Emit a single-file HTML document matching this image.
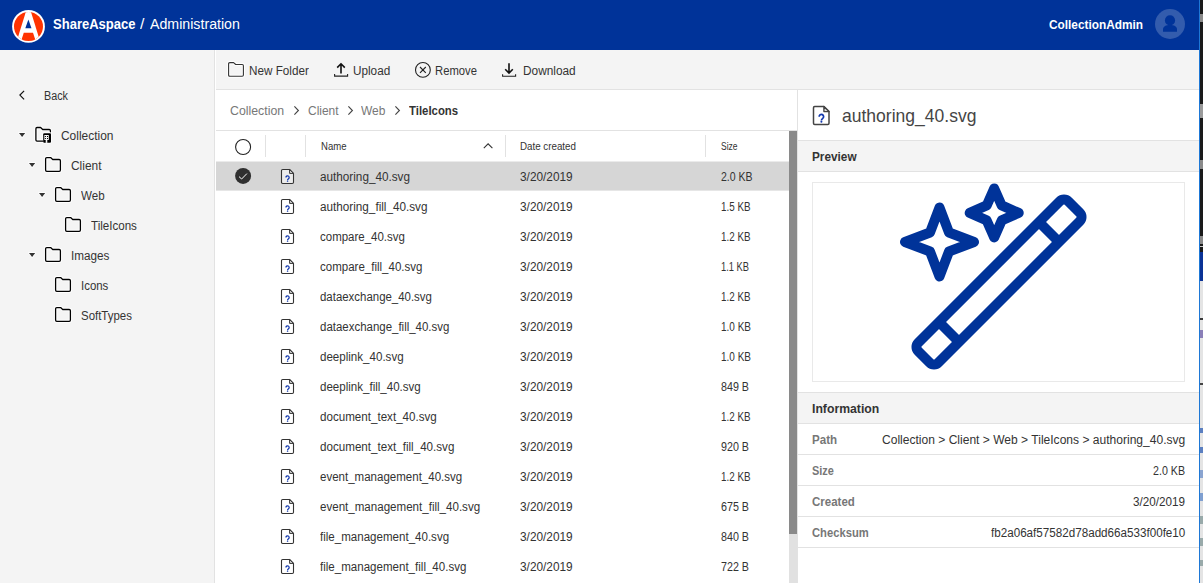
<!DOCTYPE html>
<html lang="en">
<head>
<meta charset="utf-8">
<title>ShareAspace / Administration</title>
<style>
*{box-sizing:border-box;margin:0;padding:0}
html,body{width:1203px;height:583px;overflow:hidden;background:#fff}
body{font-family:"Liberation Sans",sans-serif;color:#333;position:relative}
.abs{position:absolute}
.t{position:absolute;white-space:nowrap;color:#333;transform-origin:0 0}
#header{left:0;top:0;width:1200px;height:50px;background:#003399}
#sidebar{left:0;top:50px;width:215px;height:533px;background:#f4f4f4;border-right:1px solid #e2e2e2}
#toolbar{left:216px;top:50px;width:984px;height:40px;background:#f4f4f4;border-bottom:1px solid #e2e2e2}
#crumbs{left:216px;top:90px;width:582px;height:41px;background:#fff;border-bottom:1px solid #e2e2e2}
#list{left:216px;top:131px;width:573px;height:452px;background:#fff}
.hsep{position:absolute;top:135px;width:1px;height:22px;background:#e2e2e2}
#selrow{left:216px;top:161px;width:573px;height:30px;background:linear-gradient(#ebebeb 0,#ebebeb 1px,#d6d6d6 1px,#d6d6d6 29px,#e6e6e6 29px,#e6e6e6 30px)}
#sbtrack{left:789px;top:131px;width:8px;height:452px;background:#e1e1e1}
#sbthumb{left:789px;top:131px;width:8px;height:403px;background:#8a8a8a}
#panel{left:797px;top:90px;width:403px;height:493px;background:#fff;border-left:1px solid #e2e2e2}
.ph{position:absolute;left:798px;width:402px;background:#f4f4f4;border-top:1px solid #e2e2e2;border-bottom:1px solid #e2e2e2}
#pvbox{left:812px;top:182px;width:373px;height:200px;border:1px solid #e9e9e9;background:#fff}
.iline{position:absolute;left:798px;width:402px;height:1px;background:#e2e2e2}
#edge1{left:1199px;top:0;width:1px;height:583px;background:#1e78d6}
#edge2{left:1200px;top:0;width:3px;height:252px;background:#1a1a1a}
#edge4{left:1200px;top:252px;width:3px;height:29px;background:#0a3296}
#edge3{left:1200px;top:281px;width:3px;height:302px;background:#e4e4e4}
svg{position:absolute;overflow:visible}
</style>
</head>
<body>
<div id="header" class="abs"></div>
<div id="sidebar" class="abs"></div>
<div id="toolbar" class="abs"></div>
<div id="crumbs" class="abs"></div>
<div id="list" class="abs"></div>
<div id="selrow" class="abs"></div>
<div class="hsep" style="left:265px"></div>
<div class="hsep" style="left:305px"></div>
<div class="hsep" style="left:505px"></div>
<div class="hsep" style="left:705px"></div>
<div id="sbtrack" class="abs"></div>
<div id="sbthumb" class="abs"></div>
<div id="panel" class="abs"></div>
<div class="ph" style="top:140px;height:32px"></div>
<div class="ph" style="top:392px;height:32px"></div>
<div id="pvbox" class="abs"></div>
<div class="iline" style="top:454px"></div>
<div class="iline" style="top:485px"></div>
<div class="iline" style="top:516px"></div>
<div class="iline" style="top:547px"></div>
<div id="edge1" class="abs"></div>
<div id="edge2" class="abs"></div>
<div id="edge4" class="abs"></div>
<div id="edge3" class="abs"></div>
<div class="abs" style="left:1200px;top:14px;width:3px;height:8px;background:#8a8a8a"></div>
<div class="abs" style="left:1200px;top:104px;width:3px;height:14px;background:#9a9a9a"></div>
<div class="abs" style="left:1200px;top:160px;width:3px;height:9px;background:#8a8a8a"></div>
<div class="abs" style="left:1200px;top:236px;width:3px;height:8px;background:#8a8a8a"></div>
<div class="abs" style="left:1200px;top:246px;width:3px;height:1px;background:#ccc"></div>
<div class="abs" style="left:1200px;top:318px;width:3px;height:2px;background:#3a3a3a"></div>
<div class="abs" style="left:1200px;top:330px;width:3px;height:8px;background:#8a7fb8"></div>
<div class="abs" style="left:1200px;top:383px;width:3px;height:2px;background:#444"></div>
<div class="abs" style="left:1200px;top:428px;width:3px;height:5px;background:#5b7fc0"></div>
<div class="abs" style="left:1200px;top:447px;width:3px;height:6px;background:#5b7fc0"></div>
<div class="abs" style="left:1200px;top:470px;width:3px;height:8px;background:#8aa4d0"></div>
<div class="abs" style="left:1200px;top:493px;width:3px;height:8px;background:#7f9fd0"></div>
<div class="abs" style="left:1200px;top:516px;width:3px;height:8px;background:#9aa"></div>
<div class="abs" style="left:1200px;top:538px;width:3px;height:8px;background:#9aa"></div>
<div class="abs" style="left:1200px;top:560px;width:3px;height:6px;background:#9aa"></div>


<svg style="left:0;top:0" width="60" height="50" viewBox="0 0 60 50">
<defs><clipPath id="lc"><circle cx="28.5" cy="26.4" r="14.5"/></clipPath></defs>
<circle cx="28.5" cy="26.4" r="16.4" fill="#fff"/>
<circle cx="28.5" cy="26.4" r="14.5" fill="#ff3300"/>
<g clip-path="url(#lc)">
<polygon points="26.7,9 30.1,9 40.6,43 16.2,43" fill="#fff"/>
<polygon points="23.8,32.8 33,32.8 36.4,43 20.4,43" fill="#ff3300"/>
</g>
<polygon points="28.4,19.4 31.5,28.3 25.3,28.3" fill="#003399"/>
</svg>
<svg style="left:1150px;top:4px" width="40" height="40" viewBox="1150 4 40 40">
<circle cx="1170" cy="24" r="15" fill="#335cad"/>
<circle cx="1170" cy="20.4" r="5.1" fill="#003399"/>
<path d="M1163,31.8 V29.2 C1163,26.4 1166,24.9 1170,24.9 C1174,24.9 1177,26.4 1177,29.2 V31.8 Z" fill="#003399"/>
</svg>
<svg style="left:228px;top:62.2px" width="17" height="16" viewBox="0 0 17 16"><path d="M0.6,1.8 Q0.6,0.6 1.8,0.6 H5.6 L7.7,2.5 H14.2 Q15.4,2.5 15.4,3.7 V13.1 Q15.4,14.3 14.2,14.3 H1.8 Q0.6,14.3 0.6,13.1 Z" fill="none" stroke="#fff" stroke-width="3.1" stroke-linejoin="round"/><path d="M0.6,1.8 Q0.6,0.6 1.8,0.6 H5.6 L7.7,2.5 H14.2 Q15.4,2.5 15.4,3.7 V13.1 Q15.4,14.3 14.2,14.3 H1.8 Q0.6,14.3 0.6,13.1 Z" fill="none" stroke="#333" stroke-width="1.1" stroke-linejoin="round"/></svg>
<svg style="left:333px;top:62px" width="17" height="16" viewBox="333 62 17 16">
<path d="M341,64 V73.5 M337.2,67.6 L341,63.8 L344.8,67.6" fill="none" stroke="#111" stroke-width="1.6"/>
<path d="M334.6,74 V76.1 H347.6 V74" fill="none" stroke="#222" stroke-width="1.1"/></svg>
<svg style="left:414px;top:61px" width="18" height="18" viewBox="414 61 18 18">
<circle cx="422.9" cy="69.9" r="7.4" fill="none" stroke="#222" stroke-width="1.1"/>
<path d="M420,67 L425.8,72.8 M425.8,67 L420,72.8" fill="none" stroke="#222" stroke-width="1.1"/></svg>
<svg style="left:501px;top:62px" width="17" height="16" viewBox="501 62 17 16">
<path d="M509,63.2 V72.8 M505.2,69.2 L509,73 L512.8,69.2" fill="none" stroke="#111" stroke-width="1.6"/>
<path d="M502.6,74.2 V76.3 H515.6 V74.2" fill="none" stroke="#222" stroke-width="1.1"/></svg>
<svg style="left:293.9px;top:105.6px" width="6" height="10" viewBox="0 0 6 10"><path d="M0.4,0.4 L4.4,4.5 L0.4,8.6" fill="none" stroke="#444" stroke-width="1.15"/></svg>
<svg style="left:347.7px;top:105.6px" width="6" height="10" viewBox="0 0 6 10"><path d="M0.4,0.4 L4.4,4.5 L0.4,8.6" fill="none" stroke="#444" stroke-width="1.15"/></svg>
<svg style="left:394.7px;top:105.6px" width="6" height="10" viewBox="0 0 6 10"><path d="M0.4,0.4 L4.4,4.5 L0.4,8.6" fill="none" stroke="#444" stroke-width="1.15"/></svg>
<svg style="left:234px;top:138px" width="18" height="18" viewBox="234 138 18 18">
<circle cx="243.1" cy="147" r="7.5" fill="#fff" stroke="#222" stroke-width="1.1"/></svg>
<svg style="left:483px;top:143px" width="11" height="6" viewBox="483 143 11 6">
<path d="M483.8,148.2 L488.1,143.9 L492.4,148.2" fill="none" stroke="#333" stroke-width="1.1"/></svg>
<svg style="left:234px;top:167px" width="18" height="18" viewBox="234 167 18 18">
<circle cx="243.1" cy="175.9" r="8" fill="#303030"/>
<path d="M239,176.6 L241.6,179 L246.9,173.6" fill="none" stroke="#fff" stroke-width="1"/></svg>
<svg style="left:281.1px;top:169.1px" width="14" height="16" viewBox="0 0 14 16"><path d="M1.7,0.5 H8.6 L12.5,4.4 V13.3 Q12.5,14.5 11.3,14.5 H1.7 Q0.5,14.5 0.5,13.3 V1.7 Q0.5,0.5 1.7,0.5 Z" fill="#fff" fill-opacity="0.55" stroke="#333" stroke-width="1.1" stroke-linejoin="round"/><path d="M8.6,0.5 V4.4 H12.5 Z" fill="#ddd" stroke="#333" stroke-width="0.99" stroke-linejoin="round"/><path d="M4.94,8.55 A1.61,1.61 0 1 1 7.52,9.74 Q6.55,10.62 6.55,11.26" fill="none" stroke="#1238ae" stroke-width="1.24"/><circle cx="6.55" cy="12.13" r="0.74" fill="#1238ae"/></svg>
<svg style="left:281.1px;top:199.1px" width="14" height="16" viewBox="0 0 14 16"><path d="M1.7,0.5 H8.6 L12.5,4.4 V13.3 Q12.5,14.5 11.3,14.5 H1.7 Q0.5,14.5 0.5,13.3 V1.7 Q0.5,0.5 1.7,0.5 Z" fill="#fff" fill-opacity="0.55" stroke="#333" stroke-width="1.1" stroke-linejoin="round"/><path d="M8.6,0.5 V4.4 H12.5 Z" fill="#ddd" stroke="#333" stroke-width="0.99" stroke-linejoin="round"/><path d="M4.94,8.55 A1.61,1.61 0 1 1 7.52,9.74 Q6.55,10.62 6.55,11.26" fill="none" stroke="#1238ae" stroke-width="1.24"/><circle cx="6.55" cy="12.13" r="0.74" fill="#1238ae"/></svg>
<svg style="left:281.1px;top:229.1px" width="14" height="16" viewBox="0 0 14 16"><path d="M1.7,0.5 H8.6 L12.5,4.4 V13.3 Q12.5,14.5 11.3,14.5 H1.7 Q0.5,14.5 0.5,13.3 V1.7 Q0.5,0.5 1.7,0.5 Z" fill="#fff" fill-opacity="0.55" stroke="#333" stroke-width="1.1" stroke-linejoin="round"/><path d="M8.6,0.5 V4.4 H12.5 Z" fill="#ddd" stroke="#333" stroke-width="0.99" stroke-linejoin="round"/><path d="M4.94,8.55 A1.61,1.61 0 1 1 7.52,9.74 Q6.55,10.62 6.55,11.26" fill="none" stroke="#1238ae" stroke-width="1.24"/><circle cx="6.55" cy="12.13" r="0.74" fill="#1238ae"/></svg>
<svg style="left:281.1px;top:259.1px" width="14" height="16" viewBox="0 0 14 16"><path d="M1.7,0.5 H8.6 L12.5,4.4 V13.3 Q12.5,14.5 11.3,14.5 H1.7 Q0.5,14.5 0.5,13.3 V1.7 Q0.5,0.5 1.7,0.5 Z" fill="#fff" fill-opacity="0.55" stroke="#333" stroke-width="1.1" stroke-linejoin="round"/><path d="M8.6,0.5 V4.4 H12.5 Z" fill="#ddd" stroke="#333" stroke-width="0.99" stroke-linejoin="round"/><path d="M4.94,8.55 A1.61,1.61 0 1 1 7.52,9.74 Q6.55,10.62 6.55,11.26" fill="none" stroke="#1238ae" stroke-width="1.24"/><circle cx="6.55" cy="12.13" r="0.74" fill="#1238ae"/></svg>
<svg style="left:281.1px;top:289.1px" width="14" height="16" viewBox="0 0 14 16"><path d="M1.7,0.5 H8.6 L12.5,4.4 V13.3 Q12.5,14.5 11.3,14.5 H1.7 Q0.5,14.5 0.5,13.3 V1.7 Q0.5,0.5 1.7,0.5 Z" fill="#fff" fill-opacity="0.55" stroke="#333" stroke-width="1.1" stroke-linejoin="round"/><path d="M8.6,0.5 V4.4 H12.5 Z" fill="#ddd" stroke="#333" stroke-width="0.99" stroke-linejoin="round"/><path d="M4.94,8.55 A1.61,1.61 0 1 1 7.52,9.74 Q6.55,10.62 6.55,11.26" fill="none" stroke="#1238ae" stroke-width="1.24"/><circle cx="6.55" cy="12.13" r="0.74" fill="#1238ae"/></svg>
<svg style="left:281.1px;top:319.1px" width="14" height="16" viewBox="0 0 14 16"><path d="M1.7,0.5 H8.6 L12.5,4.4 V13.3 Q12.5,14.5 11.3,14.5 H1.7 Q0.5,14.5 0.5,13.3 V1.7 Q0.5,0.5 1.7,0.5 Z" fill="#fff" fill-opacity="0.55" stroke="#333" stroke-width="1.1" stroke-linejoin="round"/><path d="M8.6,0.5 V4.4 H12.5 Z" fill="#ddd" stroke="#333" stroke-width="0.99" stroke-linejoin="round"/><path d="M4.94,8.55 A1.61,1.61 0 1 1 7.52,9.74 Q6.55,10.62 6.55,11.26" fill="none" stroke="#1238ae" stroke-width="1.24"/><circle cx="6.55" cy="12.13" r="0.74" fill="#1238ae"/></svg>
<svg style="left:281.1px;top:349.1px" width="14" height="16" viewBox="0 0 14 16"><path d="M1.7,0.5 H8.6 L12.5,4.4 V13.3 Q12.5,14.5 11.3,14.5 H1.7 Q0.5,14.5 0.5,13.3 V1.7 Q0.5,0.5 1.7,0.5 Z" fill="#fff" fill-opacity="0.55" stroke="#333" stroke-width="1.1" stroke-linejoin="round"/><path d="M8.6,0.5 V4.4 H12.5 Z" fill="#ddd" stroke="#333" stroke-width="0.99" stroke-linejoin="round"/><path d="M4.94,8.55 A1.61,1.61 0 1 1 7.52,9.74 Q6.55,10.62 6.55,11.26" fill="none" stroke="#1238ae" stroke-width="1.24"/><circle cx="6.55" cy="12.13" r="0.74" fill="#1238ae"/></svg>
<svg style="left:281.1px;top:379.1px" width="14" height="16" viewBox="0 0 14 16"><path d="M1.7,0.5 H8.6 L12.5,4.4 V13.3 Q12.5,14.5 11.3,14.5 H1.7 Q0.5,14.5 0.5,13.3 V1.7 Q0.5,0.5 1.7,0.5 Z" fill="#fff" fill-opacity="0.55" stroke="#333" stroke-width="1.1" stroke-linejoin="round"/><path d="M8.6,0.5 V4.4 H12.5 Z" fill="#ddd" stroke="#333" stroke-width="0.99" stroke-linejoin="round"/><path d="M4.94,8.55 A1.61,1.61 0 1 1 7.52,9.74 Q6.55,10.62 6.55,11.26" fill="none" stroke="#1238ae" stroke-width="1.24"/><circle cx="6.55" cy="12.13" r="0.74" fill="#1238ae"/></svg>
<svg style="left:281.1px;top:409.1px" width="14" height="16" viewBox="0 0 14 16"><path d="M1.7,0.5 H8.6 L12.5,4.4 V13.3 Q12.5,14.5 11.3,14.5 H1.7 Q0.5,14.5 0.5,13.3 V1.7 Q0.5,0.5 1.7,0.5 Z" fill="#fff" fill-opacity="0.55" stroke="#333" stroke-width="1.1" stroke-linejoin="round"/><path d="M8.6,0.5 V4.4 H12.5 Z" fill="#ddd" stroke="#333" stroke-width="0.99" stroke-linejoin="round"/><path d="M4.94,8.55 A1.61,1.61 0 1 1 7.52,9.74 Q6.55,10.62 6.55,11.26" fill="none" stroke="#1238ae" stroke-width="1.24"/><circle cx="6.55" cy="12.13" r="0.74" fill="#1238ae"/></svg>
<svg style="left:281.1px;top:439.1px" width="14" height="16" viewBox="0 0 14 16"><path d="M1.7,0.5 H8.6 L12.5,4.4 V13.3 Q12.5,14.5 11.3,14.5 H1.7 Q0.5,14.5 0.5,13.3 V1.7 Q0.5,0.5 1.7,0.5 Z" fill="#fff" fill-opacity="0.55" stroke="#333" stroke-width="1.1" stroke-linejoin="round"/><path d="M8.6,0.5 V4.4 H12.5 Z" fill="#ddd" stroke="#333" stroke-width="0.99" stroke-linejoin="round"/><path d="M4.94,8.55 A1.61,1.61 0 1 1 7.52,9.74 Q6.55,10.62 6.55,11.26" fill="none" stroke="#1238ae" stroke-width="1.24"/><circle cx="6.55" cy="12.13" r="0.74" fill="#1238ae"/></svg>
<svg style="left:281.1px;top:469.1px" width="14" height="16" viewBox="0 0 14 16"><path d="M1.7,0.5 H8.6 L12.5,4.4 V13.3 Q12.5,14.5 11.3,14.5 H1.7 Q0.5,14.5 0.5,13.3 V1.7 Q0.5,0.5 1.7,0.5 Z" fill="#fff" fill-opacity="0.55" stroke="#333" stroke-width="1.1" stroke-linejoin="round"/><path d="M8.6,0.5 V4.4 H12.5 Z" fill="#ddd" stroke="#333" stroke-width="0.99" stroke-linejoin="round"/><path d="M4.94,8.55 A1.61,1.61 0 1 1 7.52,9.74 Q6.55,10.62 6.55,11.26" fill="none" stroke="#1238ae" stroke-width="1.24"/><circle cx="6.55" cy="12.13" r="0.74" fill="#1238ae"/></svg>
<svg style="left:281.1px;top:499.1px" width="14" height="16" viewBox="0 0 14 16"><path d="M1.7,0.5 H8.6 L12.5,4.4 V13.3 Q12.5,14.5 11.3,14.5 H1.7 Q0.5,14.5 0.5,13.3 V1.7 Q0.5,0.5 1.7,0.5 Z" fill="#fff" fill-opacity="0.55" stroke="#333" stroke-width="1.1" stroke-linejoin="round"/><path d="M8.6,0.5 V4.4 H12.5 Z" fill="#ddd" stroke="#333" stroke-width="0.99" stroke-linejoin="round"/><path d="M4.94,8.55 A1.61,1.61 0 1 1 7.52,9.74 Q6.55,10.62 6.55,11.26" fill="none" stroke="#1238ae" stroke-width="1.24"/><circle cx="6.55" cy="12.13" r="0.74" fill="#1238ae"/></svg>
<svg style="left:281.1px;top:529.1px" width="14" height="16" viewBox="0 0 14 16"><path d="M1.7,0.5 H8.6 L12.5,4.4 V13.3 Q12.5,14.5 11.3,14.5 H1.7 Q0.5,14.5 0.5,13.3 V1.7 Q0.5,0.5 1.7,0.5 Z" fill="#fff" fill-opacity="0.55" stroke="#333" stroke-width="1.1" stroke-linejoin="round"/><path d="M8.6,0.5 V4.4 H12.5 Z" fill="#ddd" stroke="#333" stroke-width="0.99" stroke-linejoin="round"/><path d="M4.94,8.55 A1.61,1.61 0 1 1 7.52,9.74 Q6.55,10.62 6.55,11.26" fill="none" stroke="#1238ae" stroke-width="1.24"/><circle cx="6.55" cy="12.13" r="0.74" fill="#1238ae"/></svg>
<svg style="left:281.1px;top:559.1px" width="14" height="16" viewBox="0 0 14 16"><path d="M1.7,0.5 H8.6 L12.5,4.4 V13.3 Q12.5,14.5 11.3,14.5 H1.7 Q0.5,14.5 0.5,13.3 V1.7 Q0.5,0.5 1.7,0.5 Z" fill="#fff" fill-opacity="0.55" stroke="#333" stroke-width="1.1" stroke-linejoin="round"/><path d="M8.6,0.5 V4.4 H12.5 Z" fill="#ddd" stroke="#333" stroke-width="0.99" stroke-linejoin="round"/><path d="M4.94,8.55 A1.61,1.61 0 1 1 7.52,9.74 Q6.55,10.62 6.55,11.26" fill="none" stroke="#1238ae" stroke-width="1.24"/><circle cx="6.55" cy="12.13" r="0.74" fill="#1238ae"/></svg>
<svg style="left:19px;top:90px" width="7" height="11" viewBox="19 90 7 11">
<path d="M24.1,90.9 L19.9,95.1 L24.1,99.3" fill="none" stroke="#111" stroke-width="1.2"/></svg>
<svg style="left:34px;top:126px" width="19" height="18" viewBox="34 126 19 18">
<path d="M42.8,141.2 H37 Q35.9,141.2 35.9,140.1 V128.7 Q35.9,127.5 37,127.5 H40.6 L42.7,129.5 H49.3 Q50.4,129.5 50.4,130.7 V131.8" fill="none" stroke="#fff" stroke-width="3.2" stroke-linejoin="round" stroke-linecap="round"/>
<rect x="42.4" y="132.4" width="9.4" height="11.2" rx="1.6" fill="#fff"/>
<path d="M42.8,141.2 H37 Q35.9,141.2 35.9,140.1 V128.7 Q35.9,127.5 37,127.5 H40.6 L42.7,129.5 H49.3 Q50.4,129.5 50.4,130.7 V131.8" fill="none" stroke="#000" stroke-width="1.3" stroke-linejoin="round" stroke-linecap="round"/>
<rect x="43.2" y="133.2" width="7.8" height="9.6" rx="1" fill="#000"/>
<rect x="44.3" y="135" width="4.5" height="5" fill="#f6f6f6"/>
<rect x="44.9" y="136" width="1" height="1" fill="#000"/><rect x="47" y="136" width="1" height="1" fill="#000"/>
<rect x="44.9" y="138" width="1" height="1" fill="#000"/><rect x="47" y="138" width="1" height="1" fill="#000"/>
<rect x="45.7" y="139.9" width="1.6" height="3" fill="#f6f6f6"/>
</svg>
<svg style="left:18.9px;top:132.9px" width="8" height="6" viewBox="0 0 8 6"><path d="M0,0 H6.2 L3.1,4 Z" fill="#333" stroke="#fff" stroke-width="1.6" stroke-linejoin="round" paint-order="stroke"/></svg>
<svg style="left:44.95px;top:156.9px" width="17" height="16" viewBox="0 0 17 16"><path d="M0.6,1.8 Q0.6,0.6 1.8,0.6 H5.6 L7.7,2.5 H14.2 Q15.4,2.5 15.4,3.7 V13.1 Q15.4,14.3 14.2,14.3 H1.8 Q0.6,14.3 0.6,13.1 Z" fill="none" stroke="#fff" stroke-width="3.3" stroke-linejoin="round"/><path d="M0.6,1.8 Q0.6,0.6 1.8,0.6 H5.6 L7.7,2.5 H14.2 Q15.4,2.5 15.4,3.7 V13.1 Q15.4,14.3 14.2,14.3 H1.8 Q0.6,14.3 0.6,13.1 Z" fill="none" stroke="#000" stroke-width="1.3" stroke-linejoin="round"/></svg>
<svg style="left:28.9px;top:162.9px" width="8" height="6" viewBox="0 0 8 6"><path d="M0,0 H6.2 L3.1,4 Z" fill="#333" stroke="#fff" stroke-width="1.6" stroke-linejoin="round" paint-order="stroke"/></svg>
<svg style="left:54.95px;top:186.9px" width="17" height="16" viewBox="0 0 17 16"><path d="M0.6,1.8 Q0.6,0.6 1.8,0.6 H5.6 L7.7,2.5 H14.2 Q15.4,2.5 15.4,3.7 V13.1 Q15.4,14.3 14.2,14.3 H1.8 Q0.6,14.3 0.6,13.1 Z" fill="none" stroke="#fff" stroke-width="3.3" stroke-linejoin="round"/><path d="M0.6,1.8 Q0.6,0.6 1.8,0.6 H5.6 L7.7,2.5 H14.2 Q15.4,2.5 15.4,3.7 V13.1 Q15.4,14.3 14.2,14.3 H1.8 Q0.6,14.3 0.6,13.1 Z" fill="none" stroke="#000" stroke-width="1.3" stroke-linejoin="round"/></svg>
<svg style="left:38.9px;top:192.9px" width="8" height="6" viewBox="0 0 8 6"><path d="M0,0 H6.2 L3.1,4 Z" fill="#333" stroke="#fff" stroke-width="1.6" stroke-linejoin="round" paint-order="stroke"/></svg>
<svg style="left:64.95px;top:216.9px" width="17" height="16" viewBox="0 0 17 16"><path d="M0.6,1.8 Q0.6,0.6 1.8,0.6 H5.6 L7.7,2.5 H14.2 Q15.4,2.5 15.4,3.7 V13.1 Q15.4,14.3 14.2,14.3 H1.8 Q0.6,14.3 0.6,13.1 Z" fill="none" stroke="#fff" stroke-width="3.3" stroke-linejoin="round"/><path d="M0.6,1.8 Q0.6,0.6 1.8,0.6 H5.6 L7.7,2.5 H14.2 Q15.4,2.5 15.4,3.7 V13.1 Q15.4,14.3 14.2,14.3 H1.8 Q0.6,14.3 0.6,13.1 Z" fill="none" stroke="#000" stroke-width="1.3" stroke-linejoin="round"/></svg>
<svg style="left:44.95px;top:246.9px" width="17" height="16" viewBox="0 0 17 16"><path d="M0.6,1.8 Q0.6,0.6 1.8,0.6 H5.6 L7.7,2.5 H14.2 Q15.4,2.5 15.4,3.7 V13.1 Q15.4,14.3 14.2,14.3 H1.8 Q0.6,14.3 0.6,13.1 Z" fill="none" stroke="#fff" stroke-width="3.3" stroke-linejoin="round"/><path d="M0.6,1.8 Q0.6,0.6 1.8,0.6 H5.6 L7.7,2.5 H14.2 Q15.4,2.5 15.4,3.7 V13.1 Q15.4,14.3 14.2,14.3 H1.8 Q0.6,14.3 0.6,13.1 Z" fill="none" stroke="#000" stroke-width="1.3" stroke-linejoin="round"/></svg>
<svg style="left:28.9px;top:252.9px" width="8" height="6" viewBox="0 0 8 6"><path d="M0,0 H6.2 L3.1,4 Z" fill="#333" stroke="#fff" stroke-width="1.6" stroke-linejoin="round" paint-order="stroke"/></svg>
<svg style="left:54.95px;top:276.9px" width="17" height="16" viewBox="0 0 17 16"><path d="M0.6,1.8 Q0.6,0.6 1.8,0.6 H5.6 L7.7,2.5 H14.2 Q15.4,2.5 15.4,3.7 V13.1 Q15.4,14.3 14.2,14.3 H1.8 Q0.6,14.3 0.6,13.1 Z" fill="none" stroke="#fff" stroke-width="3.3" stroke-linejoin="round"/><path d="M0.6,1.8 Q0.6,0.6 1.8,0.6 H5.6 L7.7,2.5 H14.2 Q15.4,2.5 15.4,3.7 V13.1 Q15.4,14.3 14.2,14.3 H1.8 Q0.6,14.3 0.6,13.1 Z" fill="none" stroke="#000" stroke-width="1.3" stroke-linejoin="round"/></svg>
<svg style="left:54.95px;top:306.9px" width="17" height="16" viewBox="0 0 17 16"><path d="M0.6,1.8 Q0.6,0.6 1.8,0.6 H5.6 L7.7,2.5 H14.2 Q15.4,2.5 15.4,3.7 V13.1 Q15.4,14.3 14.2,14.3 H1.8 Q0.6,14.3 0.6,13.1 Z" fill="none" stroke="#fff" stroke-width="3.3" stroke-linejoin="round"/><path d="M0.6,1.8 Q0.6,0.6 1.8,0.6 H5.6 L7.7,2.5 H14.2 Q15.4,2.5 15.4,3.7 V13.1 Q15.4,14.3 14.2,14.3 H1.8 Q0.6,14.3 0.6,13.1 Z" fill="none" stroke="#000" stroke-width="1.3" stroke-linejoin="round"/></svg>
<svg style="left:813.2px;top:106.0px" width="17.5" height="20" viewBox="0 0 17.5 20"><path d="M1.7,0.5 H10.9 L16.0,5.6 V17.3 Q16.0,18.5 14.8,18.5 H1.7 Q0.5,18.5 0.5,17.3 V1.7 Q0.5,0.5 1.7,0.5 Z" fill="#fff" fill-opacity="0.55" stroke="#444" stroke-width="1.5" stroke-linejoin="round"/><path d="M10.9,0.5 V5.6 H16.0 Z" fill="#ddd" stroke="#444" stroke-width="1.35" stroke-linejoin="round"/><path d="M6.18,10.74 A2.22,2.22 0 1 1 9.73,12.39 Q8.40,13.60 8.40,14.48" fill="none" stroke="#1238ae" stroke-width="1.71"/><circle cx="8.40" cy="15.69" r="1.02" fill="#1238ae"/></svg>
<svg style="left:899px;top:182px" width="200" height="200" viewBox="0 0 40 40">
<g fill="none" stroke="#003399" stroke-width="2" stroke-linejoin="round" stroke-linecap="round">
<rect x="-1.215" y="17.172" width="42.43" height="5.657" rx="1.2" transform="rotate(-45 20 20)"/>
<path d="M8,28 L12,32 M28,8 L32,12" stroke-linecap="butt"/>
<path d="M8.1,5.1 L10,10.1 L15,12 L10,13.9 L8.1,18.9 L6.2,13.9 L1.2,12 L6.2,10.1 Z"/>
<path d="M19.04,1.28 L20.54,4.68 L23.94,6.18 L20.54,7.68 L19.04,11.08 L17.54,7.68 L14.14,6.18 L17.54,4.68 Z"/>
</g></svg>

<span class="t" style="left:53.1px;top:16px;font-size:14px;line-height:16px;height:16px;transform:scaleX(0.9299);font-weight:700;color:#fff;">ShareAspace</span>
<span class="t" style="left:140.3px;top:16px;font-size:14px;line-height:16px;height:16px;transform:scaleX(1.1312);color:#fff;">/</span>
<span class="t" style="left:149.6px;top:16px;font-size:14px;line-height:16px;height:16px;transform:scaleX(1.0135);color:#fff;">Administration</span>
<span class="t" style="left:1049.0px;top:18px;font-size:12.5px;line-height:14px;height:14px;transform:scaleX(0.9466);font-weight:700;color:#fff;">CollectionAdmin</span>
<span class="t" style="left:248.6px;top:64px;font-size:12.5px;line-height:14px;height:14px;transform:scaleX(0.9357);">New Folder</span>
<span class="t" style="left:353.0px;top:64px;font-size:12.5px;line-height:14px;height:14px;transform:scaleX(0.9391);">Upload</span>
<span class="t" style="left:435.4px;top:64px;font-size:12.5px;line-height:14px;height:14px;transform:scaleX(0.9002);">Remove</span>
<span class="t" style="left:522.5px;top:64px;font-size:12.5px;line-height:14px;height:14px;transform:scaleX(0.9480);">Download</span>
<span class="t" style="left:230.0px;top:104px;font-size:12.5px;line-height:14px;height:14px;transform:scaleX(0.9856);color:#777;">Collection</span>
<span class="t" style="left:307.8px;top:104px;font-size:12.5px;line-height:14px;height:14px;transform:scaleX(0.9575);color:#777;">Client</span>
<span class="t" style="left:361.4px;top:104px;font-size:12.5px;line-height:14px;height:14px;transform:scaleX(0.9578);color:#777;">Web</span>
<span class="t" style="left:409.3px;top:104px;font-size:12.5px;line-height:14px;height:14px;transform:scaleX(0.9100);font-weight:700;">TileIcons</span>
<span class="t" style="left:320.7px;top:141px;font-size:10px;line-height:11px;height:11px;transform:scaleX(0.9560);">Name</span>
<span class="t" style="left:520.3px;top:141px;font-size:10px;line-height:11px;height:11px;transform:scaleX(0.9763);">Date created</span>
<span class="t" style="left:720.5px;top:141px;font-size:10px;line-height:11px;height:11px;transform:scaleX(0.8482);">Size</span>
<span class="t" style="left:320.0px;top:170px;font-size:12.5px;line-height:14px;height:14px;transform:scaleX(0.9384);">authoring_40.svg</span>
<span class="t" style="left:520.1px;top:170px;font-size:12.5px;line-height:14px;height:14px;transform:scaleX(0.9477);">3/20/2019</span>
<span class="t" style="left:720.5px;top:170px;font-size:12.5px;line-height:14px;height:14px;transform:scaleX(0.8421);">2.0 KB</span>
<span class="t" style="left:320.0px;top:200px;font-size:12.5px;line-height:14px;height:14px;transform:scaleX(0.9375);">authoring_fill_40.svg</span>
<span class="t" style="left:520.1px;top:200px;font-size:12.5px;line-height:14px;height:14px;transform:scaleX(0.9477);">3/20/2019</span>
<span class="t" style="left:720.5px;top:200px;font-size:12.5px;line-height:14px;height:14px;transform:scaleX(0.7862);">1.5 KB</span>
<span class="t" style="left:320.0px;top:230px;font-size:12.5px;line-height:14px;height:14px;transform:scaleX(0.9187);">compare_40.svg</span>
<span class="t" style="left:520.1px;top:230px;font-size:12.5px;line-height:14px;height:14px;transform:scaleX(0.9477);">3/20/2019</span>
<span class="t" style="left:720.5px;top:230px;font-size:12.5px;line-height:14px;height:14px;transform:scaleX(0.7862);">1.2 KB</span>
<span class="t" style="left:320.0px;top:260px;font-size:12.5px;line-height:14px;height:14px;transform:scaleX(0.9211);">compare_fill_40.svg</span>
<span class="t" style="left:520.1px;top:260px;font-size:12.5px;line-height:14px;height:14px;transform:scaleX(0.9477);">3/20/2019</span>
<span class="t" style="left:720.5px;top:260px;font-size:12.5px;line-height:14px;height:14px;transform:scaleX(0.7462);">1.1 KB</span>
<span class="t" style="left:320.0px;top:290px;font-size:12.5px;line-height:14px;height:14px;transform:scaleX(0.9148);">dataexchange_40.svg</span>
<span class="t" style="left:520.1px;top:290px;font-size:12.5px;line-height:14px;height:14px;transform:scaleX(0.9477);">3/20/2019</span>
<span class="t" style="left:720.5px;top:290px;font-size:12.5px;line-height:14px;height:14px;transform:scaleX(0.7862);">1.2 KB</span>
<span class="t" style="left:320.0px;top:320px;font-size:12.5px;line-height:14px;height:14px;transform:scaleX(0.9172);">dataexchange_fill_40.svg</span>
<span class="t" style="left:520.1px;top:320px;font-size:12.5px;line-height:14px;height:14px;transform:scaleX(0.9477);">3/20/2019</span>
<span class="t" style="left:720.5px;top:320px;font-size:12.5px;line-height:14px;height:14px;transform:scaleX(0.7995);">1.0 KB</span>
<span class="t" style="left:320.0px;top:350px;font-size:12.5px;line-height:14px;height:14px;transform:scaleX(0.9253);">deeplink_40.svg</span>
<span class="t" style="left:520.1px;top:350px;font-size:12.5px;line-height:14px;height:14px;transform:scaleX(0.9477);">3/20/2019</span>
<span class="t" style="left:720.5px;top:350px;font-size:12.5px;line-height:14px;height:14px;transform:scaleX(0.7995);">1.0 KB</span>
<span class="t" style="left:320.0px;top:380px;font-size:12.5px;line-height:14px;height:14px;transform:scaleX(0.9239);">deeplink_fill_40.svg</span>
<span class="t" style="left:520.1px;top:380px;font-size:12.5px;line-height:14px;height:14px;transform:scaleX(0.9477);">3/20/2019</span>
<span class="t" style="left:720.5px;top:380px;font-size:12.5px;line-height:14px;height:14px;transform:scaleX(0.8572);">849 B</span>
<span class="t" style="left:320.0px;top:410px;font-size:12.5px;line-height:14px;height:14px;transform:scaleX(0.9286);">document_text_40.svg</span>
<span class="t" style="left:520.1px;top:410px;font-size:12.5px;line-height:14px;height:14px;transform:scaleX(0.9477);">3/20/2019</span>
<span class="t" style="left:720.5px;top:410px;font-size:12.5px;line-height:14px;height:14px;transform:scaleX(0.7862);">1.2 KB</span>
<span class="t" style="left:320.0px;top:440px;font-size:12.5px;line-height:14px;height:14px;transform:scaleX(0.9299);">document_text_fill_40.svg</span>
<span class="t" style="left:520.1px;top:440px;font-size:12.5px;line-height:14px;height:14px;transform:scaleX(0.9477);">3/20/2019</span>
<span class="t" style="left:720.5px;top:440px;font-size:12.5px;line-height:14px;height:14px;transform:scaleX(0.8572);">920 B</span>
<span class="t" style="left:320.0px;top:470px;font-size:12.5px;line-height:14px;height:14px;transform:scaleX(0.9217);">event_management_40.svg</span>
<span class="t" style="left:520.1px;top:470px;font-size:12.5px;line-height:14px;height:14px;transform:scaleX(0.9477);">3/20/2019</span>
<span class="t" style="left:720.5px;top:470px;font-size:12.5px;line-height:14px;height:14px;transform:scaleX(0.7862);">1.2 KB</span>
<span class="t" style="left:320.0px;top:500px;font-size:12.5px;line-height:14px;height:14px;transform:scaleX(0.9253);">event_management_fill_40.svg</span>
<span class="t" style="left:520.1px;top:500px;font-size:12.5px;line-height:14px;height:14px;transform:scaleX(0.9477);">3/20/2019</span>
<span class="t" style="left:720.5px;top:500px;font-size:12.5px;line-height:14px;height:14px;transform:scaleX(0.8572);">675 B</span>
<span class="t" style="left:320.0px;top:530px;font-size:12.5px;line-height:14px;height:14px;transform:scaleX(0.9243);">file_management_40.svg</span>
<span class="t" style="left:520.1px;top:530px;font-size:12.5px;line-height:14px;height:14px;transform:scaleX(0.9477);">3/20/2019</span>
<span class="t" style="left:720.5px;top:530px;font-size:12.5px;line-height:14px;height:14px;transform:scaleX(0.8572);">840 B</span>
<span class="t" style="left:320.0px;top:560px;font-size:12.5px;line-height:14px;height:14px;transform:scaleX(0.9241);">file_management_fill_40.svg</span>
<span class="t" style="left:520.1px;top:560px;font-size:12.5px;line-height:14px;height:14px;transform:scaleX(0.9477);">3/20/2019</span>
<span class="t" style="left:720.5px;top:560px;font-size:12.5px;line-height:14px;height:14px;transform:scaleX(0.8572);">722 B</span>
<span class="t" style="left:44.0px;top:89px;font-size:12.5px;line-height:14px;height:14px;transform:scaleX(0.8636);">Back</span>
<span class="t" style="left:61.1px;top:129px;font-size:12.5px;line-height:14px;height:14px;transform:scaleX(0.9547);">Collection</span>
<span class="t" style="left:70.9px;top:159px;font-size:12.5px;line-height:14px;height:14px;transform:scaleX(0.9544);">Client</span>
<span class="t" style="left:81.1px;top:189px;font-size:12.5px;line-height:14px;height:14px;transform:scaleX(0.9264);">Web</span>
<span class="t" style="left:91.2px;top:219px;font-size:12.5px;line-height:14px;height:14px;transform:scaleX(0.9263);">TileIcons</span>
<span class="t" style="left:70.9px;top:249px;font-size:12.5px;line-height:14px;height:14px;transform:scaleX(0.9368);">Images</span>
<span class="t" style="left:81.1px;top:279px;font-size:12.5px;line-height:14px;height:14px;transform:scaleX(0.9138);">Icons</span>
<span class="t" style="left:81.1px;top:309px;font-size:12.5px;line-height:14px;height:14px;transform:scaleX(0.9157);">SoftTypes</span>
<span class="t" style="left:842.4px;top:105px;font-size:18.5px;line-height:21px;height:21px;transform:scaleX(0.9476);color:#454545;">authoring_40.svg</span>
<span class="t" style="left:812.2px;top:150px;font-size:12.5px;line-height:14px;height:14px;transform:scaleX(0.9438);font-weight:700;">Preview</span>
<span class="t" style="left:812.4px;top:402px;font-size:12.5px;line-height:14px;height:14px;transform:scaleX(0.9775);font-weight:700;">Information</span>
<span class="t" style="left:812.4px;top:433px;font-size:12.5px;line-height:14px;height:14px;transform:scaleX(0.9266);font-weight:700;color:#777;">Path</span>
<span class="t" style="left:812.4px;top:464px;font-size:12.5px;line-height:14px;height:14px;transform:scaleX(0.8756);font-weight:700;color:#777;">Size</span>
<span class="t" style="left:812.4px;top:495px;font-size:12.5px;line-height:14px;height:14px;transform:scaleX(0.9195);font-weight:700;color:#777;">Created</span>
<span class="t" style="left:812.4px;top:526px;font-size:12.5px;line-height:14px;height:14px;transform:scaleX(0.8969);font-weight:700;color:#777;">Checksum</span>
<span class="t" style="left:882.0px;top:433px;font-size:12.5px;line-height:14px;height:14px;transform:scaleX(0.9642);">Collection &gt; Client &gt; Web &gt; TileIcons &gt; authoring_40.svg</span>
<span class="t" style="left:1152.5px;top:464px;font-size:12.5px;line-height:14px;height:14px;transform:scaleX(0.8528);">2.0 KB</span>
<span class="t" style="left:1132.6px;top:495px;font-size:12.5px;line-height:14px;height:14px;transform:scaleX(0.9333);">3/20/2019</span>
<span class="t" style="left:991.0px;top:526px;font-size:12.5px;line-height:14px;height:14px;transform:scaleX(0.9317);">fb2a06af57582d78add66a533f00fe10</span>
</body>
</html>
